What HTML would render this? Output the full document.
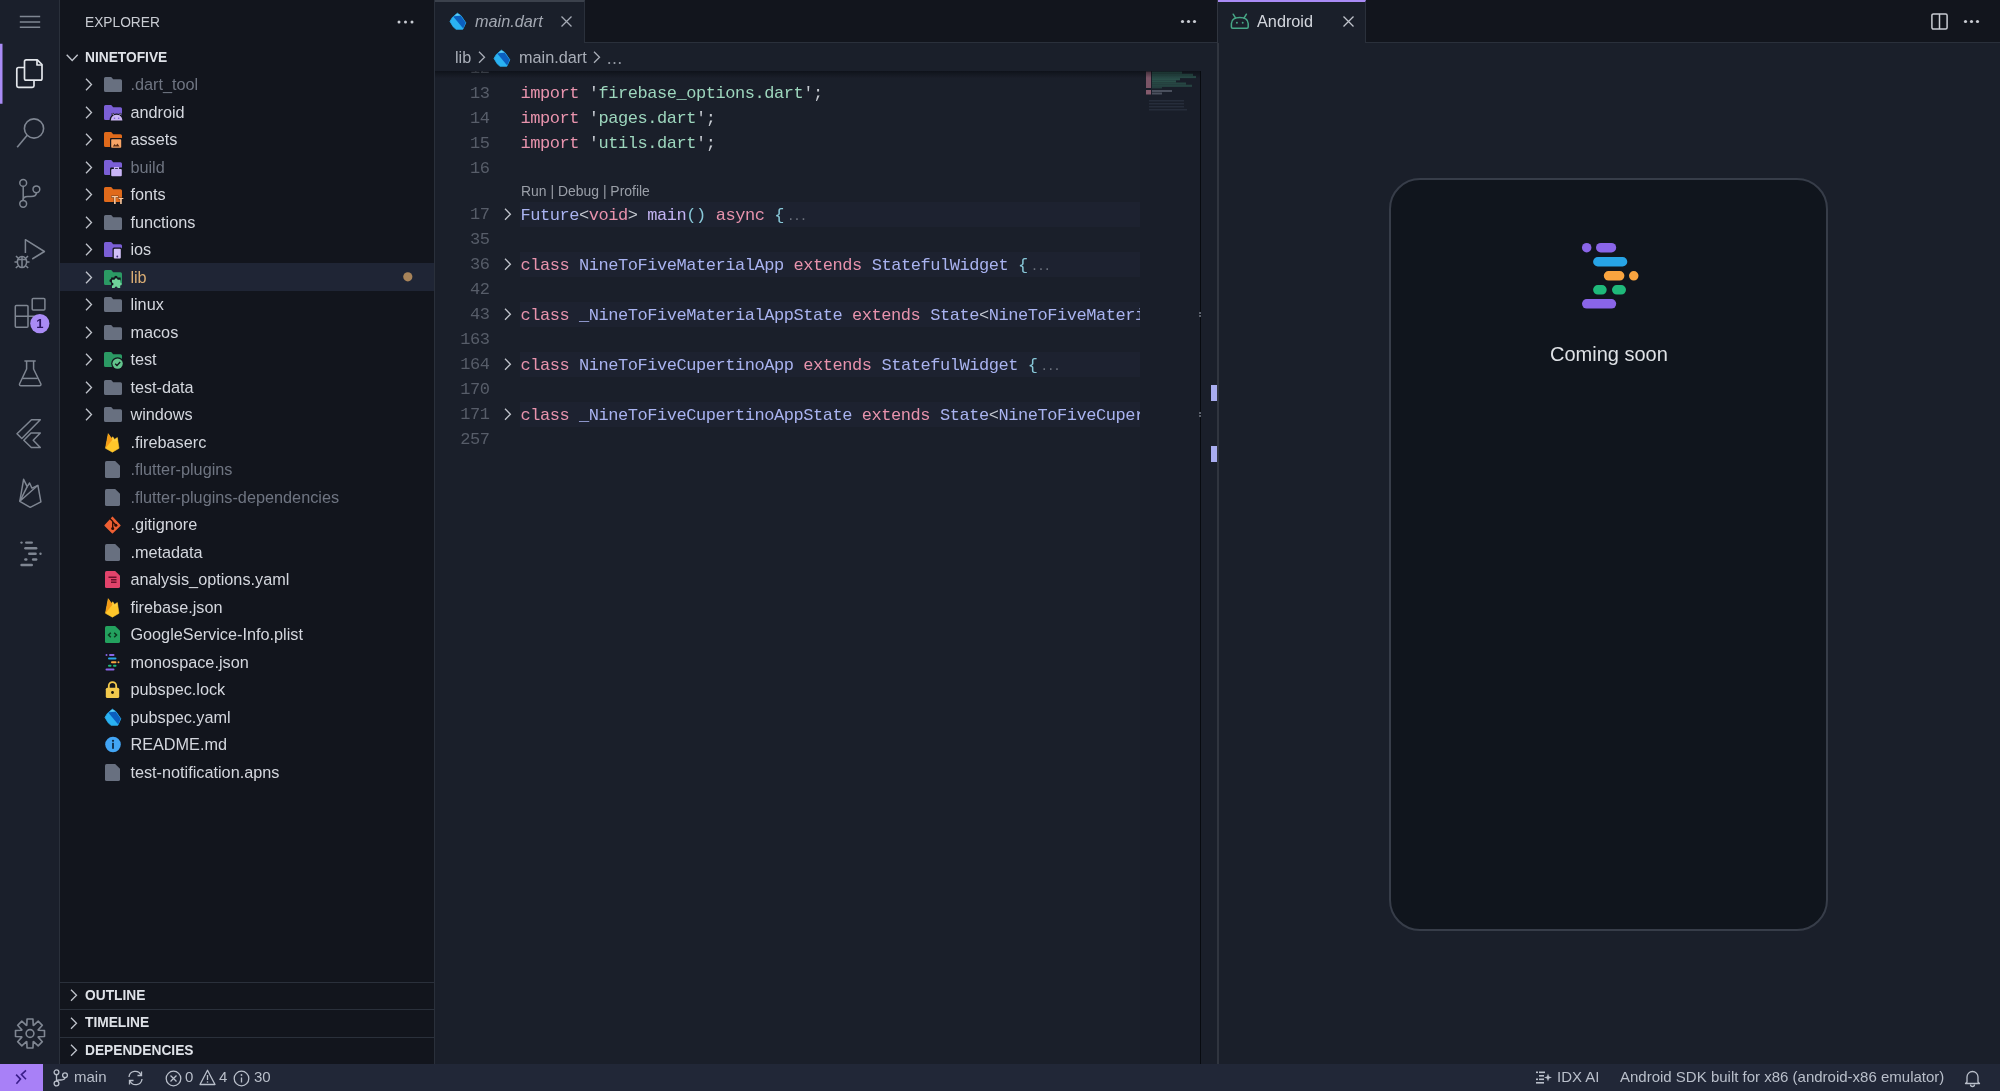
<!DOCTYPE html>
<html><head><meta charset="utf-8">
<style>
*{box-sizing:border-box;margin:0;padding:0}
html,body{width:2000px;height:1091px;overflow:hidden;background:#1a1f28;font-family:"Liberation Sans",sans-serif;color:#d4d7de}
.a{position:absolute}
svg{position:absolute;overflow:visible}
#act{left:0;top:0;width:60px;height:1064px;background:#1a1f2b;border-right:1px solid #2a303b}
#side{left:60px;top:0;width:375px;height:1064px;background:#12151d;border-right:1px solid #2a303b}
#ed{left:435px;top:0;width:783px;height:1064px;background:#1a1f2a}
#pn{left:1218px;top:0;width:782px;height:1064px;background:#1a1f2a}
#st{left:0;top:1064px;width:2000px;height:27px;background:#212737;font-size:15px;color:#b9bfca}
.row{position:absolute;left:0;width:374px;height:27.5px;font-size:16.25px;line-height:27.5px;white-space:nowrap}
.row .t{position:absolute;left:70.4px;top:0.3px}
.dim{color:#6f7582}
.sec{position:absolute;left:0;width:374px;height:27.5px;border-top:1px solid #2a303b;font-size:13.75px;font-weight:bold;line-height:26px;color:#dfe2e8}
.sec span{position:absolute;left:25px}
.cl{position:absolute;left:0;width:766px;height:25px;font-family:"Liberation Mono",monospace;font-size:17px;letter-spacing:-0.45px;line-height:26px;white-space:pre}
.cl .ln{position:absolute;top:0.4px;left:25.25px;width:29.25px;text-align:right;color:#575d69}
.cl .ct{position:absolute;top:0.4px;left:85.5px;color:#c5c9d0}
.cl .fh{position:absolute;left:85px;top:0;width:619.5px;height:25px;background:#1d2230}
.a{will-change:transform}</style></head><body>
<!-- ACTIVITY BAR -->
<div id="act" class="a">
  <svg style="left:0;top:0" width="60" height="1064">
   <g stroke="#7f8692" stroke-width="1.5" fill="none">
    <path d="M19.8 16.6H40.2M19.8 21.9H40.2M19.8 27.2H40.2"/>
   </g>
   <rect x="0" y="43.75" width="2.5" height="60" fill="#a98bf5"/>
   <g stroke="#e3e6eb" stroke-width="1.7" fill="none" stroke-linejoin="round">
    <path d="M24.5 67.5H18.5Q16.8 67.5 16.8 69.2V85.8Q16.8 87.3 18.5 87.3H32.3Q34 87.3 34 85.8V80.5"/>
    <path d="M26.2 59.8H37.3L42 64.5V78.5Q42 80.2 40.3 80.2H26.2Q24.5 80.2 24.5 78.5V61.5Q24.5 59.8 26.2 59.8Z"/>
    <path d="M37 60V65H42"/>
   </g>
   <g stroke="#7f8692" stroke-width="1.6" fill="none">
    <circle cx="34" cy="128.5" r="9.6"/>
    <path d="M27.2 135.3L17.2 147.3"/>
   </g>
   <g stroke="#7f8692" stroke-width="1.5" fill="none">
    <circle cx="23.2" cy="182.9" r="3.4"/>
    <circle cx="36.4" cy="189.3" r="3.4"/>
    <circle cx="23.2" cy="203.8" r="3.4"/>
    <path d="M23.2 186.3V200.4"/>
    <path d="M36.4 192.7Q36.4 196.5 31 196.5H27.5Q23.2 196.5 23.2 200"/>
   </g>
   <g stroke="#7f8692" stroke-width="1.5" fill="none" stroke-linejoin="round">
    <path d="M25.4 253V239.7L44.4 251.5L32.2 259"/>
    <ellipse cx="22" cy="262" rx="4.6" ry="5.6"/>
    <path d="M17.6 259.5H26.4M22 257V267.5M16 256L18 258M28 256L26 258M14.5 262H17.4M26.6 262H29.5M15.8 268L18 266M28.2 268L26 266"/>
   </g>
   <g stroke="#7f8692" stroke-width="1.5" fill="none">
    <rect x="15.3" y="305.5" width="12.7" height="21.7" rx="1"/>
    <path d="M15.3 316.3H28M28 316.3H38.5"/>
    <rect x="32.2" y="298.6" width="12.7" height="11.4" rx="1"/>
   </g>
   <circle cx="39.8" cy="323.6" r="9.6" fill="#a98bf5"/>
   <text x="39.8" y="328.3" text-anchor="middle" font-family="Liberation Sans" font-weight="bold" font-size="13" fill="#2a1560">1</text>
   <g stroke="#7f8692" stroke-width="1.5" fill="none" stroke-linejoin="round">
    <path d="M24.4 361H35.7M26.6 361V369L19.5 384Q19.2 385.7 21 385.7H39.5Q41.2 385.7 40.9 384L33.6 369V361"/>
    <path d="M22.5 378.4H37.8"/>
   </g>
   <g stroke="#7f8692" stroke-width="1.5" fill="none" stroke-linejoin="round">
    <path d="M31.5 419.8H40.3L21.8 438.5L17 433.8Z"/>
    <path d="M31 433H40.3L33.2 440.3L40.3 447.5H31.3L23.8 440.3Z"/>
   </g>
   <g stroke="#7f8692" stroke-width="1.5" fill="none" stroke-linejoin="round">
    <path d="M30.2 507.3L19.8 501.3L23.6 479.3L27.2 486.6L29.6 483L32 488.2L37.9 485.3L40.9 501.8Z"/>
    <path d="M19.8 501.3L37.9 485.3M19.8 501.3L27.2 486.6"/>
   </g>
   <g fill="#7f8692">
    <rect x="20.3" y="541.4" width="2.4" height="2.4" rx="1.2"/>
    <rect x="25" y="541.4" width="8" height="2.4" rx="1.2"/>
    <rect x="24.2" y="547.1" width="13.2" height="2.4" rx="1.2"/>
    <rect x="28" y="552.6" width="8.8" height="2.4" rx="1.2"/>
    <rect x="39.3" y="552.6" width="2.4" height="2.4" rx="1.2"/>
    <rect x="24.2" y="558.3" width="3.3" height="2.4" rx="1.2"/>
    <rect x="31.9" y="558.3" width="5.5" height="2.4" rx="1.2"/>
    <rect x="20.3" y="563.8" width="12.7" height="2.4" rx="1.2"/>
   </g>
   <g transform="translate(30 1033.5)" stroke="#7f8692" stroke-width="1.6" fill="none" stroke-linejoin="round">
    <path d="M-3.22 -8.30 L-2.94 -14.50 L2.94 -14.50 L3.22 -8.30 L3.59 -8.14 L8.18 -12.34 L12.34 -8.18 L8.14 -3.59 L8.30 -3.22 L14.50 -2.94 L14.50 2.94 L8.30 3.22 L8.14 3.59 L12.34 8.18 L8.18 12.34 L3.59 8.14 L3.22 8.30 L2.94 14.50 L-2.94 14.50 L-3.22 8.30 L-3.59 8.14 L-8.18 12.34 L-12.34 8.18 L-8.14 3.59 L-8.30 3.22 L-14.50 2.94 L-14.50 -2.94 L-8.30 -3.22 L-8.14 -3.59 L-12.34 -8.18 L-8.18 -12.34 L-3.59 -8.14Z"/>
    <circle r="3.9"/>
   </g>
  </svg>
</div>
<!-- SIDEBAR -->
<div id="side" class="a">
  <div class="a" style="left:25px;top:14.5px;font-size:13.75px;line-height:16px;color:#c9ccd3">EXPLORER</div>
  <svg style="left:336px;top:18.5px" width="22" height="6"><circle cx="3" cy="3" r="1.5" fill="#c9ccd3"/><circle cx="9.5" cy="3" r="1.5" fill="#c9ccd3"/><circle cx="16" cy="3" r="1.5" fill="#c9ccd3"/></svg>
  <svg style="left:6px;top:53.5px" width="13" height="8"><path d="M0.7 0.8L6.2 6.5L11.7 0.8" fill="none" stroke="#c0c4cc" stroke-width="1.4"/></svg>
  <div class="a" style="left:25px;top:50px;font-size:13.75px;line-height:16px;font-weight:bold;color:#dfe2e8">NINETOFIVE</div>
  <div class="row" style="top:70.75px;"><svg style="left:24.7px;top:7.25px" width="8" height="13"><path d="M1 0.8 L6.5 6.5 L1 12.2" fill="none" stroke="#c0c4cc" stroke-width="1.3"/></svg><svg style="left:43.6px;top:6.25px" width="19" height="16"><path d="M1.5 0H7.2L9.2 2.3H16.5Q18 2.3 18 3.8V13.5Q18 15 16.5 15H1.5Q0 15 0 13.5V1.5Q0 0 1.5 0Z" fill="#687080" transform="translate(0 0)"/></svg><span class="t" style="color:#6f7582;">.dart_tool</span></div>
<div class="row" style="top:98.25px;"><svg style="left:24.7px;top:7.25px" width="8" height="13"><path d="M1 0.8 L6.5 6.5 L1 12.2" fill="none" stroke="#c0c4cc" stroke-width="1.3"/></svg><svg style="left:43.6px;top:6.25px" width="19" height="16"><path d="M1.5 0H7.2L9.2 2.3H16.5Q18 2.3 18 3.8V13.5Q18 15 16.5 15H1.5Q0 15 0 13.5V1.5Q0 0 1.5 0Z" fill="#7b5fd6" transform="translate(0 0)"/><path d="M5.3 16.2Q5.8 8.4 12.6 8.4Q19.4 8.4 19.9 16.2Z" fill="#12151d"/><path d="M6.8 15.6Q7.2 9.8 12.6 9.8Q18 9.8 18.4 15.6Z" fill="#cdb8f6"/><path d="M8.2 8.2L9.6 10.6M17 8.2L15.6 10.6" stroke="#12151d" stroke-width="2.2"/><path d="M8.6 8.6L9.8 10.6M16.6 8.6L15.4 10.6" stroke="#cdb8f6" stroke-width="1"/><circle cx="10.5" cy="13.2" r="0.8" fill="#7b5fd6"/><circle cx="14.7" cy="13.2" r="0.8" fill="#7b5fd6"/></svg><span class="t" style="">android</span></div>
<div class="row" style="top:125.75px;"><svg style="left:24.7px;top:7.25px" width="8" height="13"><path d="M1 0.8 L6.5 6.5 L1 12.2" fill="none" stroke="#c0c4cc" stroke-width="1.3"/></svg><svg style="left:43.6px;top:6.25px" width="19" height="16"><path d="M1.5 0H7.2L9.2 2.3H16.5Q18 2.3 18 3.8V13.5Q18 15 16.5 15H1.5Q0 15 0 13.5V1.5Q0 0 1.5 0Z" fill="#e06a1b" transform="translate(0 0)"/><rect x="6" y="6" width="12.5" height="10.5" rx="1" fill="#12151d"/><rect x="7.2" y="7.2" width="10" height="8.5" rx="0.8" fill="#f7a466"/><path d="M8.8 14.5L10.6 12L12 13.5L13.4 11.5L15.6 14.5Z" fill="#5a2a10"/></svg><span class="t" style="">assets</span></div>
<div class="row" style="top:153.25px;"><svg style="left:24.7px;top:7.25px" width="8" height="13"><path d="M1 0.8 L6.5 6.5 L1 12.2" fill="none" stroke="#c0c4cc" stroke-width="1.3"/></svg><svg style="left:43.6px;top:6.25px" width="19" height="16"><path d="M1.5 0H7.2L9.2 2.3H16.5Q18 2.3 18 3.8V13.5Q18 15 16.5 15H1.5Q0 15 0 13.5V1.5Q0 0 1.5 0Z" fill="#7b5fd6" transform="translate(0 0)"/><rect x="6" y="7.5" width="13" height="9.5" rx="1.2" fill="#12151d"/><rect x="7.2" y="9" width="10.6" height="7.2" rx="1" fill="#c9b4f6"/><path d="M10.5 9V7.6H14.5V9" fill="none" stroke="#c9b4f6" stroke-width="1.2"/></svg><span class="t" style="color:#6f7582;">build</span></div>
<div class="row" style="top:180.75px;"><svg style="left:24.7px;top:7.25px" width="8" height="13"><path d="M1 0.8 L6.5 6.5 L1 12.2" fill="none" stroke="#c0c4cc" stroke-width="1.3"/></svg><svg style="left:43.6px;top:6.25px" width="19" height="16"><path d="M1.5 0H7.2L9.2 2.3H16.5Q18 2.3 18 3.8V13.5Q18 15 16.5 15H1.5Q0 15 0 13.5V1.5Q0 0 1.5 0Z" fill="#e06a1b" transform="translate(0 0)"/><rect x="6.5" y="6.5" width="12" height="10" fill="#12151d" opacity="0"/><text x="7.5" y="16.5" font-family="Liberation Sans" font-weight="bold" font-size="11" fill="#f9c9a0" stroke="#12151d" stroke-width="0.6" paint-order="stroke">Tт</text></svg><span class="t" style="">fonts</span></div>
<div class="row" style="top:208.25px;"><svg style="left:24.7px;top:7.25px" width="8" height="13"><path d="M1 0.8 L6.5 6.5 L1 12.2" fill="none" stroke="#c0c4cc" stroke-width="1.3"/></svg><svg style="left:43.6px;top:6.25px" width="19" height="16"><path d="M1.5 0H7.2L9.2 2.3H16.5Q18 2.3 18 3.8V13.5Q18 15 16.5 15H1.5Q0 15 0 13.5V1.5Q0 0 1.5 0Z" fill="#687080" transform="translate(0 0)"/></svg><span class="t" style="">functions</span></div>
<div class="row" style="top:235.75px;"><svg style="left:24.7px;top:7.25px" width="8" height="13"><path d="M1 0.8 L6.5 6.5 L1 12.2" fill="none" stroke="#c0c4cc" stroke-width="1.3"/></svg><svg style="left:43.6px;top:6.25px" width="19" height="16"><path d="M1.5 0H7.2L9.2 2.3H16.5Q18 2.3 18 3.8V13.5Q18 15 16.5 15H1.5Q0 15 0 13.5V1.5Q0 0 1.5 0Z" fill="#7b5fd6" transform="translate(0 0)"/><rect x="8.5" y="5.5" width="9.5" height="12" rx="1.5" fill="#12151d"/><rect x="9.8" y="6.8" width="7" height="9.8" rx="1" fill="#d2c0f8"/><circle cx="13.3" cy="14.5" r="0.9" fill="#3b2a78"/></svg><span class="t" style="">ios</span></div>
<div class="row" style="top:263.25px;background:#1f2535;"><svg style="left:24.7px;top:7.25px" width="8" height="13"><path d="M1 0.8 L6.5 6.5 L1 12.2" fill="none" stroke="#c0c4cc" stroke-width="1.3"/></svg><svg style="left:43.6px;top:6.25px" width="19" height="16"><path d="M1.5 0H7.2L9.2 2.3H16.5Q18 2.3 18 3.8V13.5Q18 15 16.5 15H1.5Q0 15 0 13.5V1.5Q0 0 1.5 0Z" fill="#2b9a64" transform="translate(0 0)"/><path d="M7 10.5h3.2a1.8 1.8 0 1 1 3.6 0H17v3.3a1.8 1.8 0 1 0 0 3.2V19H13.8a1.8 1.8 0 1 0-3.6 0H7V15.8a1.8 1.8 0 1 1 0-3.6Z" fill="#12151d" transform="translate(0.5 -2.5) scale(0.95)"/><path d="M8 9.8h2.6a1.5 1.5 0 1 1 3 0H16.2v2.6a1.5 1.5 0 1 1 0 3v2.6H13.6a1.5 1.5 0 1 0-3 0H8V15.4a1.5 1.5 0 1 0 0-3Z" fill="#6fd49a"/></svg><span class="t" style="color:#d9ad74;">lib</span><svg style="left:343px;top:8.75px" width="10" height="10"><circle cx="4.8" cy="4.8" r="4.6" fill="#a8845a"/></svg></div>
<div class="row" style="top:290.75px;"><svg style="left:24.7px;top:7.25px" width="8" height="13"><path d="M1 0.8 L6.5 6.5 L1 12.2" fill="none" stroke="#c0c4cc" stroke-width="1.3"/></svg><svg style="left:43.6px;top:6.25px" width="19" height="16"><path d="M1.5 0H7.2L9.2 2.3H16.5Q18 2.3 18 3.8V13.5Q18 15 16.5 15H1.5Q0 15 0 13.5V1.5Q0 0 1.5 0Z" fill="#687080" transform="translate(0 0)"/></svg><span class="t" style="">linux</span></div>
<div class="row" style="top:318.25px;"><svg style="left:24.7px;top:7.25px" width="8" height="13"><path d="M1 0.8 L6.5 6.5 L1 12.2" fill="none" stroke="#c0c4cc" stroke-width="1.3"/></svg><svg style="left:43.6px;top:6.25px" width="19" height="16"><path d="M1.5 0H7.2L9.2 2.3H16.5Q18 2.3 18 3.8V13.5Q18 15 16.5 15H1.5Q0 15 0 13.5V1.5Q0 0 1.5 0Z" fill="#687080" transform="translate(0 0)"/></svg><span class="t" style="">macos</span></div>
<div class="row" style="top:345.75px;"><svg style="left:24.7px;top:7.25px" width="8" height="13"><path d="M1 0.8 L6.5 6.5 L1 12.2" fill="none" stroke="#c0c4cc" stroke-width="1.3"/></svg><svg style="left:43.6px;top:6.25px" width="19" height="16"><path d="M1.5 0H7.2L9.2 2.3H16.5Q18 2.3 18 3.8V13.5Q18 15 16.5 15H1.5Q0 15 0 13.5V1.5Q0 0 1.5 0Z" fill="#2b9a64" transform="translate(0 0)"/><circle cx="13.6" cy="11.6" r="6.4" fill="#12151d"/><circle cx="13.6" cy="11.6" r="5.2" fill="#62c48c"/><path d="M11.2 11.7L13 13.4L16.2 10.1" fill="none" stroke="#12151d" stroke-width="1.4"/></svg><span class="t" style="">test</span></div>
<div class="row" style="top:373.25px;"><svg style="left:24.7px;top:7.25px" width="8" height="13"><path d="M1 0.8 L6.5 6.5 L1 12.2" fill="none" stroke="#c0c4cc" stroke-width="1.3"/></svg><svg style="left:43.6px;top:6.25px" width="19" height="16"><path d="M1.5 0H7.2L9.2 2.3H16.5Q18 2.3 18 3.8V13.5Q18 15 16.5 15H1.5Q0 15 0 13.5V1.5Q0 0 1.5 0Z" fill="#687080" transform="translate(0 0)"/></svg><span class="t" style="">test-data</span></div>
<div class="row" style="top:400.75px;"><svg style="left:24.7px;top:7.25px" width="8" height="13"><path d="M1 0.8 L6.5 6.5 L1 12.2" fill="none" stroke="#c0c4cc" stroke-width="1.3"/></svg><svg style="left:43.6px;top:6.25px" width="19" height="16"><path d="M1.5 0H7.2L9.2 2.3H16.5Q18 2.3 18 3.8V13.5Q18 15 16.5 15H1.5Q0 15 0 13.5V1.5Q0 0 1.5 0Z" fill="#687080" transform="translate(0 0)"/></svg><span class="t" style="">windows</span></div>
<div class="row" style="top:428.25px;"><svg style="left:45px;top:5.25px" width="16" height="17"><path d="M3.25 -0.3L0.5 14.3L7.4 18.15L14 14.3L12.3 3.6L9.6 5.4L7.65 2.75L6.3 4.6Z" fill="#ffc62a" stroke="#ffc62a" stroke-width="0.6" stroke-linejoin="round"/><path d="M3.25 -0.3L0.5 14.3L7.6 5.6Z" fill="#f59a16"/><path d="M7.65 2.75L9.6 5.4L12.3 3.6L12.8 7L7.2 7.5Z" fill="#ffd54f" opacity="0.5"/></svg><span class="t" style="">.firebaserc</span></div>
<div class="row" style="top:455.75px;"><svg style="left:45px;top:5.25px" width="15" height="17"><path d="M1.6 0H10.2L15 4.8V15.4Q15 17 13.4 17H1.6Q0 17 0 15.4V1.6Q0 0 1.6 0Z" fill="#687080" transform="translate(0 0)"/></svg><span class="t" style="color:#6f7582;">.flutter-plugins</span></div>
<div class="row" style="top:483.25px;"><svg style="left:45px;top:5.25px" width="15" height="17"><path d="M1.6 0H10.2L15 4.8V15.4Q15 17 13.4 17H1.6Q0 17 0 15.4V1.6Q0 0 1.6 0Z" fill="#687080" transform="translate(0 0)"/></svg><span class="t" style="color:#6f7582;">.flutter-plugins-dependencies</span></div>
<div class="row" style="top:510.75px;"><svg style="left:45px;top:5.25px" width="16" height="17"><path d="M7.4 0.6Q7.4 0.3 7.8 0.7L15.4 8.9Q15.9 9.4 15.4 9.9L7.9 17.2Q7.4 17.7 6.9 17.2L-0.4 9.9Q-0.9 9.4 -0.4 8.9Z" fill="#ee5f33"/><path d="M4.6 2.2L7.7 5.3V12.6M7.7 5.6L10.9 9.3" fill="none" stroke="#2a0e06" stroke-width="1.3"/><circle cx="7.7" cy="12.6" r="1.5" fill="#2a0e06"/><circle cx="10.9" cy="9.3" r="1.5" fill="#2a0e06"/></svg><span class="t" style="">.gitignore</span></div>
<div class="row" style="top:538.25px;"><svg style="left:45px;top:5.25px" width="15" height="17"><path d="M1.6 0H10.2L15 4.8V15.4Q15 17 13.4 17H1.6Q0 17 0 15.4V1.6Q0 0 1.6 0Z" fill="#687080" transform="translate(0 0)"/></svg><span class="t" style="">.metadata</span></div>
<div class="row" style="top:565.75px;"><svg style="left:45px;top:5.25px" width="15" height="17"><path d="M1.6 0H10.2L15 4.8V15.4Q15 17 13.4 17H1.6Q0 17 0 15.4V1.6Q0 0 1.6 0Z" fill="#e2436b" transform="translate(0 0)"/><path d="M3.5 6.3H11.5M6 8.8H11.5M6 11.3H11.5" stroke="#6a0f2a" stroke-width="1.5"/></svg><span class="t" style="">analysis_options.yaml</span></div>
<div class="row" style="top:593.25px;"><svg style="left:45px;top:5.25px" width="16" height="17"><path d="M3.25 -0.3L0.5 14.3L7.4 18.15L14 14.3L12.3 3.6L9.6 5.4L7.65 2.75L6.3 4.6Z" fill="#ffc62a" stroke="#ffc62a" stroke-width="0.6" stroke-linejoin="round"/><path d="M3.25 -0.3L0.5 14.3L7.6 5.6Z" fill="#f59a16"/><path d="M7.65 2.75L9.6 5.4L12.3 3.6L12.8 7L7.2 7.5Z" fill="#ffd54f" opacity="0.5"/></svg><span class="t" style="">firebase.json</span></div>
<div class="row" style="top:620.75px;"><svg style="left:45px;top:5.25px" width="15" height="17"><path d="M1.6 0H10.2L15 4.8V15.4Q15 17 13.4 17H1.6Q0 17 0 15.4V1.6Q0 0 1.6 0Z" fill="#23a15e" transform="translate(0 0)"/><path d="M5.8 6.8L3.5 9L5.8 11.2M9.2 6.8L11.5 9L9.2 11.2" fill="none" stroke="#0c3a1f" stroke-width="1.5"/></svg><span class="t" style="">GoogleService-Info.plist</span></div>
<div class="row" style="top:648.25px;"><svg style="left:45px;top:5.25px" width="16" height="17"><rect x="0.5" y="0" width="2" height="2" rx="1" fill="#8a65e8"/><rect x="4" y="0" width="5.5" height="2" rx="1" fill="#8a65e8"/><rect x="3" y="3.6" width="8.5" height="2" rx="1" fill="#27a4e6"/><rect x="6" y="7.2" width="5.5" height="2" rx="1" fill="#f9a43f"/><rect x="12.5" y="7.2" width="2" height="2" rx="1" fill="#f9a43f"/><rect x="3" y="10.8" width="3.5" height="2" rx="1" fill="#1fb97a"/><rect x="8" y="10.8" width="3.5" height="2" rx="1" fill="#1fb97a"/><rect x="0.5" y="14.4" width="9" height="2" rx="1" fill="#8a65e8"/></svg><span class="t" style="">monospace.json</span></div>
<div class="row" style="top:675.75px;"><svg style="left:45px;top:5.25px" width="16" height="17"><path d="M3.8 7V4.8A3.7 3.7 0 0 1 11.2 4.8V7" fill="none" stroke="#f2c94c" stroke-width="1.8"/><rect x="0.8" y="6.8" width="13.4" height="10.2" rx="1.5" fill="#f2c94c"/><circle cx="7.5" cy="11.5" r="1.4" fill="#1a1608"/></svg><span class="t" style="">pubspec.lock</span></div>
<div class="row" style="top:703.25px;"><svg style="left:45px;top:5.25px" width="16" height="17"><path d="M7.4 0.2L11 2.7L15.8 9.8L12.8 16.3H6.1L3.2 13.8L0 8.4L2.4 4.4Z" fill="#2ab2f2" stroke="#2ab2f2" stroke-width="0.8" stroke-linejoin="round"/><path d="M3.2 3.6L10.5 2.5L15.6 9.8L13.2 15.4Z" fill="#0b5fbf"/><path d="M4.5 2.6L7.4 0.4L10.6 2.5Z" fill="#64cdf5"/></svg><span class="t" style="">pubspec.yaml</span></div>
<div class="row" style="top:730.75px;"><svg style="left:45px;top:5.25px" width="16" height="17"><circle cx="8" cy="8.5" r="7.8" fill="#42a5f5"/><circle cx="8" cy="4.8" r="1.1" fill="#0d2a45"/><rect x="7.1" y="6.8" width="1.8" height="6" fill="#0d2a45"/></svg><span class="t" style="">README.md</span></div>
<div class="row" style="top:758.25px;"><svg style="left:45px;top:5.25px" width="15" height="17"><path d="M1.6 0H10.2L15 4.8V15.4Q15 17 13.4 17H1.6Q0 17 0 15.4V1.6Q0 0 1.6 0Z" fill="#687080" transform="translate(0 0)"/></svg><span class="t" style="">test-notification.apns</span></div>
  <div class="sec" style="top:981.5px"><svg style="left:9.5px;top:6.5px" width="8" height="13"><path d="M1 0.8L6.5 6.3L1 11.8" fill="none" stroke="#c0c4cc" stroke-width="1.3"/></svg><span>OUTLINE</span></div>
  <div class="sec" style="top:1009px"><svg style="left:9.5px;top:6.5px" width="8" height="13"><path d="M1 0.8L6.5 6.3L1 11.8" fill="none" stroke="#c0c4cc" stroke-width="1.3"/></svg><span>TIMELINE</span></div>
  <div class="sec" style="top:1036.5px"><svg style="left:9.5px;top:6.5px" width="8" height="13"><path d="M1 0.8L6.5 6.3L1 11.8" fill="none" stroke="#c0c4cc" stroke-width="1.3"/></svg><span>DEPENDENCIES</span></div>
</div>
<!-- EDITOR -->
<div id="ed" class="a">
  <div class="a" style="left:0;top:0;width:783px;height:43px;background:#12151d;border-bottom:1px solid #2a303b"></div>
  <div class="a" style="left:0;top:0;width:150px;height:43px;background:#1a1f2a;border-top:2px solid #3b414c;border-right:1px solid #2a303b"></div>
  <svg style="left:15px;top:13px" width="17" height="17"><path d="M7.4 0.2L11 2.7L15.8 9.8L12.8 16.3H6.1L3.2 13.8L0 8.4L2.4 4.4Z" fill="#2ab2f2" stroke="#2ab2f2" stroke-width="0.8" stroke-linejoin="round"/><path d="M3.2 3.6L10.5 2.5L15.6 9.8L13.2 15.4Z" fill="#0b5fbf"/><path d="M4.5 2.6L7.4 0.4L10.6 2.5Z" fill="#64cdf5"/></svg>
  <div class="a" style="left:40px;top:11px;font-size:16.25px;line-height:20px;font-style:italic;color:#a3a8b2;white-space:nowrap">main.dart</div>
  <svg style="left:126px;top:16px" width="11" height="11"><path d="M0.5 0.5L10.5 10.5M10.5 0.5L0.5 10.5" stroke="#a5abb5" stroke-width="1.3"/></svg>
  <svg style="left:745px;top:18.5px" width="20" height="5"><circle cx="2.5" cy="2.5" r="1.6" fill="#c9ccd3"/><circle cx="8.5" cy="2.5" r="1.6" fill="#c9ccd3"/><circle cx="14.5" cy="2.5" r="1.6" fill="#c9ccd3"/></svg>
  <!-- breadcrumbs -->
  <div class="a" style="left:0;top:43px;width:783px;height:27.5px;background:#1a1f2a"></div>
  <div class="a" style="left:20px;top:47px;font-size:16.25px;line-height:20px;color:#a9aeb8;white-space:nowrap">lib</div>
  <svg style="left:43px;top:51px" width="8" height="13"><path d="M1 0.8L6.5 6.3L1 11.8" fill="none" stroke="#a9aeb8" stroke-width="1.3"/></svg>
  <svg style="left:59px;top:49.5px" width="17" height="17"><path d="M7.4 0.2L11 2.7L15.8 9.8L12.8 16.3H6.1L3.2 13.8L0 8.4L2.4 4.4Z" fill="#2ab2f2" stroke="#2ab2f2" stroke-width="0.8" stroke-linejoin="round"/><path d="M3.2 3.6L10.5 2.5L15.6 9.8L13.2 15.4Z" fill="#0b5fbf"/><path d="M4.5 2.6L7.4 0.4L10.6 2.5Z" fill="#64cdf5"/></svg>
  <div class="a" style="left:84px;top:47px;font-size:16.25px;line-height:20px;color:#a9aeb8;white-space:nowrap">main.dart</div>
  <svg style="left:158px;top:51px" width="8" height="13"><path d="M1 0.8L6.5 6.3L1 11.8" fill="none" stroke="#a9aeb8" stroke-width="1.3"/></svg>
  <svg style="left:172px;top:60.5px" width="16" height="4"><circle cx="2.2" cy="2" r="1.05" fill="#9ea3ad"/><circle cx="7.5" cy="2" r="1.05" fill="#9ea3ad"/><circle cx="12.8" cy="2" r="1.05" fill="#9ea3ad"/></svg>
  <!-- code area -->
  <div id="code" class="a" style="left:0;top:70.5px;width:766px;height:993.5px;overflow:hidden;background:#1a1f2a">
<div class="cl" style="top:-15.5px">
<div class="ln">12</div><div class="ct"></div></div>
<div class="cl" style="top:9.5px">
<div class="ln">13</div><div class="ct"><span style="color:#e893ad">import</span> <span style="color:#c5c9d0">'</span><span style="color:#9dd6bd">firebase_options.dart</span><span style="color:#c5c9d0">'</span><span style="color:#c5c9d0">;</span></div></div>
<div class="cl" style="top:34.5px">
<div class="ln">14</div><div class="ct"><span style="color:#e893ad">import</span> <span style="color:#c5c9d0">'</span><span style="color:#9dd6bd">pages.dart</span><span style="color:#c5c9d0">'</span><span style="color:#c5c9d0">;</span></div></div>
<div class="cl" style="top:59.5px">
<div class="ln">15</div><div class="ct"><span style="color:#e893ad">import</span> <span style="color:#c5c9d0">'</span><span style="color:#9dd6bd">utils.dart</span><span style="color:#c5c9d0">'</span><span style="color:#c5c9d0">;</span></div></div>
<div class="cl" style="top:84.5px">
<div class="ln">16</div><div class="ct"></div></div>
<div class="cl" style="top:130.5px">
<div class="fh"></div>
<svg style="left:69.4px;top:6.4px" width="8" height="13"><path d="M1 0.8L6.4 6.3L1 11.8" fill="none" stroke="#c0c4cc" stroke-width="1.3"/></svg>
<div class="ln">17</div><div class="ct"><span style="color:#a9b3f0">Future</span><span style="color:#c5c9d0">&lt;</span><span style="color:#e893ad">void</span><span style="color:#c5c9d0">&gt;</span> <span style="color:#c2b3f2">main</span><span style="color:#88c8d8">()</span> <span style="color:#e893ad">async</span> <span style="color:#88c8d8">{</span><span style="font-family:'Liberation Sans',sans-serif;font-size:16px;letter-spacing:2px;margin-left:4.5px;color:#6a707c">...</span></div></div>
<div class="cl" style="top:155.5px">
<div class="ln">35</div><div class="ct"></div></div>
<div class="cl" style="top:180.5px">
<div class="fh"></div>
<svg style="left:69.4px;top:6.4px" width="8" height="13"><path d="M1 0.8L6.4 6.3L1 11.8" fill="none" stroke="#c0c4cc" stroke-width="1.3"/></svg>
<div class="ln">36</div><div class="ct"><span style="color:#e893ad">class</span> <span style="color:#a9b3f0">NineToFiveMaterialApp</span> <span style="color:#e893ad">extends</span> <span style="color:#a9b3f0">StatefulWidget</span> <span style="color:#88c8d8">{</span><span style="font-family:'Liberation Sans',sans-serif;font-size:16px;letter-spacing:2px;margin-left:4.5px;color:#6a707c">...</span></div></div>
<div class="cl" style="top:205.5px">
<div class="ln">42</div><div class="ct"></div></div>
<div class="cl" style="top:230.5px">
<div class="fh"></div>
<svg style="left:69.4px;top:6.4px" width="8" height="13"><path d="M1 0.8L6.4 6.3L1 11.8" fill="none" stroke="#c0c4cc" stroke-width="1.3"/></svg>
<div class="ln">43</div><div class="ct"><span style="color:#e893ad">class</span> <span style="color:#a9b3f0">_NineToFiveMaterialAppState</span> <span style="color:#e893ad">extends</span> <span style="color:#a9b3f0">State</span><span style="color:#c5c9d0">&lt;</span><span style="color:#a9b3f0">NineToFiveMaterialApp</span><span style="color:#c5c9d0">&gt;</span> <span style="color:#88c8d8">{</span><span style="font-family:'Liberation Sans',sans-serif;font-size:16px;letter-spacing:2px;margin-left:4.5px;color:#6a707c">...</span></div></div>
<div class="cl" style="top:255.5px">
<div class="ln">163</div><div class="ct"></div></div>
<div class="cl" style="top:280.5px">
<div class="fh"></div>
<svg style="left:69.4px;top:6.4px" width="8" height="13"><path d="M1 0.8L6.4 6.3L1 11.8" fill="none" stroke="#c0c4cc" stroke-width="1.3"/></svg>
<div class="ln">164</div><div class="ct"><span style="color:#e893ad">class</span> <span style="color:#a9b3f0">NineToFiveCupertinoApp</span> <span style="color:#e893ad">extends</span> <span style="color:#a9b3f0">StatefulWidget</span> <span style="color:#88c8d8">{</span><span style="font-family:'Liberation Sans',sans-serif;font-size:16px;letter-spacing:2px;margin-left:4.5px;color:#6a707c">...</span></div></div>
<div class="cl" style="top:305.5px">
<div class="ln">170</div><div class="ct"></div></div>
<div class="cl" style="top:330.5px">
<div class="fh"></div>
<svg style="left:69.4px;top:6.4px" width="8" height="13"><path d="M1 0.8L6.4 6.3L1 11.8" fill="none" stroke="#c0c4cc" stroke-width="1.3"/></svg>
<div class="ln">171</div><div class="ct"><span style="color:#e893ad">class</span> <span style="color:#a9b3f0">_NineToFiveCupertinoAppState</span> <span style="color:#e893ad">extends</span> <span style="color:#a9b3f0">State</span><span style="color:#c5c9d0">&lt;</span><span style="color:#a9b3f0">NineToFiveCupertinoApp</span><span style="color:#c5c9d0">&gt;</span> <span style="color:#88c8d8">{</span><span style="font-family:'Liberation Sans',sans-serif;font-size:16px;letter-spacing:2px;margin-left:4.5px;color:#6a707c">...</span></div></div>
<div class="cl" style="top:355.5px">
<div class="ln">257</div><div class="ct"></div></div>
<div class="a" style="left:85.5px;top:109.6px;font-size:13.95px;line-height:21px;color:#9a9fa8;white-space:nowrap">Run | Debug | Profile</div>
  </div>
  
  <!-- minimap -->
  <div class="a" style="left:705px;top:70.5px;width:61px;height:993.5px;background:#191e29"></div>
  <svg style="left:705px;top:66px" width="61" height="50">
   <rect x="6" y="5.5" width="5" height="16.5" fill="#7a5466"/>
   <g fill="#3a7a66" opacity="0.6">
    <rect x="12" y="5.5" width="30" height="2.2"/>
    <rect x="12" y="7.7" width="41" height="2.2" opacity="0.85"/>
    <rect x="12" y="9.9" width="44" height="2.2" opacity="0.8"/>
    <rect x="12" y="12.1" width="28" height="2.2" opacity="0.9"/>
    <rect x="12" y="14.3" width="24" height="2.2" opacity="0.9"/>
    <rect x="12" y="16.5" width="34" height="2.2" opacity="0.75"/>
    <rect x="12" y="18.7" width="40" height="2.2" opacity="0.7"/>
    <rect x="12" y="20.9" width="10" height="1.5" opacity="0.6"/>
   </g>
   <rect x="6" y="24" width="5" height="4.5" fill="#845a6c"/>
   <rect x="12" y="24" width="20" height="2" fill="#6b7180" opacity="0.6"/>
   <rect x="12" y="26.5" width="10" height="2" fill="#6b7180" opacity="0.6"/>
   <g fill="#2a3140" opacity="0.8">
    <rect x="9" y="34" width="35" height="1.5"/><rect x="9" y="37" width="35" height="1.5"/><rect x="9" y="40" width="35" height="1.5"/><rect x="9" y="43" width="38" height="1.5"/>
   </g>
  </svg>
  <div class="a" style="left:0;top:70.5px;width:766px;height:7px;background:linear-gradient(rgba(6,8,12,0.5),rgba(6,8,12,0))"></div>
  <!-- scrollbar -->
  <div class="a" style="left:765.3px;top:70.5px;width:1.2px;height:993.5px;background:#080b10"></div>
  <div class="a" style="left:763.8px;top:311.5px;width:1.5px;height:2px;background:#5a606b"></div><div class="a" style="left:763.8px;top:314.5px;width:1.5px;height:2px;background:#5a606b"></div>
  <div class="a" style="left:763.8px;top:411.5px;width:1.5px;height:2px;background:#5a606b"></div><div class="a" style="left:763.8px;top:414.5px;width:1.5px;height:2px;background:#5a606b"></div>
  <div class="a" style="left:776px;top:385px;width:6px;height:15.5px;background:#a9adf0"></div>
  <div class="a" style="left:776px;top:446px;width:6px;height:16px;background:#a9adf0"></div>
</div>
<!-- PANEL -->
<div id="pn" class="a">
  <div class="a" style="left:0;top:0;width:782px;height:43px;background:#12151d;border-bottom:1px solid #2a303b"></div>
  <div class="a" style="left:-1.1px;top:0;width:2.2px;height:1064px;background:#30353f"></div>
  <div class="a" style="left:0;top:0;width:148px;height:43px;background:#1a1f2a;border-top:2px solid #a98bf5;border-right:1px solid #2a303b"></div>
  <svg style="left:12px;top:13px" width="20" height="17"><g fill="none" stroke="#47a686" stroke-width="1.5" stroke-linecap="round"><path d="M1.4 10.5Q1.8 4.6 9.8 4.6Q17.8 4.6 18.2 10.5V14Q18.2 15.2 17 15.2H2.6Q1.4 15.2 1.4 14Z" stroke-linejoin="round"/><path d="M3.2 1.2L5.6 5.2M16.4 1.2L14 5.2"/></g><circle cx="6.9" cy="9.8" r="0.95" fill="#47a686"/><circle cx="12.7" cy="9.8" r="0.95" fill="#47a686"/></svg>
  <div class="a" style="left:39px;top:11px;font-size:16.25px;line-height:20px;color:#d4d7de;white-space:nowrap">Android</div>
  <svg style="left:125px;top:16px" width="11" height="11"><path d="M0.5 0.5L10.5 10.5M10.5 0.5L0.5 10.5" stroke="#c0c4cc" stroke-width="1.3"/></svg>
  <svg style="left:713px;top:13px" width="17" height="17"><rect x="0.9" y="0.9" width="15.2" height="15.2" rx="1.5" fill="none" stroke="#c9ccd3" stroke-width="1.5"/><path d="M8.5 1V16" stroke="#c9ccd3" stroke-width="1.5"/></svg>
  <svg style="left:745px;top:18.5px" width="20" height="5"><circle cx="2.5" cy="2.5" r="1.6" fill="#c9ccd3"/><circle cx="8.5" cy="2.5" r="1.6" fill="#c9ccd3"/><circle cx="14.5" cy="2.5" r="1.6" fill="#c9ccd3"/></svg>
  <div class="a" style="left:171px;top:178px;width:439px;height:752.5px;background:#10151d;border:2.5px solid #373d49;border-radius:31px"></div>
  <svg style="left:0;top:0" width="782" height="400"><g stroke-linecap="round" stroke-width="9.5">
    <path d="M368.7 247.7h0" stroke="#8a65e8"/>
    <path d="M382.75 247.7h10.7" stroke="#8a65e8"/>
    <path d="M379.85 261.75h24.7" stroke="#27a4e6"/>
    <path d="M390.55 275.8h11.1M415.75 275.8h0" stroke="#f9a43f"/>
    <path d="M379.85 289.8h4.1M398.75 289.8h4.5" stroke="#1fb97a"/>
    <path d="M368.75 303.8h24.7" stroke="#8a65e8"/>
  </g></svg>
  <div class="a" style="left:332px;top:342px;font-size:20px;line-height:24px;color:#dfe2e6;white-space:nowrap">Coming soon</div>
</div>
<!-- STATUS -->
<div id="st" class="a">
  <div class="a" style="left:0;top:0;width:42.5px;height:27px;background:#a880f7"></div>
  <svg style="left:15px;top:6px" width="13" height="15"><path d="M1.1 4.6L5.5 9.1L1.4 13.8M11 0.3L6.4 4.6L11 9.3" fill="none" stroke="#3a1d8a" stroke-width="1.6"/></svg>
  <svg style="left:53px;top:5px" width="16" height="18"><g fill="none" stroke="#b9bfca" stroke-width="1.3"><circle cx="3.5" cy="3.3" r="2.4"/><circle cx="3.5" cy="14.5" r="2.4"/><circle cx="12" cy="6.2" r="2.4"/><path d="M3.5 5.7V12.1M12 8.6Q12 11 8 11H6Q3.5 11 3.5 12.5"/></g></svg>
  <div class="a" style="left:74px;top:3.4px;line-height:19px;white-space:nowrap">main</div>
  <svg style="left:127px;top:6px" width="17" height="16"><g fill="none" stroke="#b9bfca" stroke-width="1.3"><path d="M2 7A6.3 6.3 0 0 1 14 5M15 9A6.3 6.3 0 0 1 3 11"/><path d="M14.5 1.5V5.5H10.5M2.5 14.5V10.5H6.5"/></g></svg>
  <svg style="left:165px;top:5.5px" width="17" height="17"><g fill="none" stroke="#b9bfca" stroke-width="1.3"><circle cx="8.5" cy="8.5" r="7.3"/><path d="M5.5 5.5L11.5 11.5M11.5 5.5L5.5 11.5"/></g></svg>
  <div class="a" style="left:185px;top:3.4px;line-height:19px">0</div>
  <svg style="left:199px;top:5px" width="17" height="17"><g fill="none" stroke="#b9bfca" stroke-width="1.3" stroke-linejoin="round"><path d="M8.5 1.3L16 15.5H1Z"/><path d="M8.5 6V11"/></g><circle cx="8.5" cy="13" r="0.8" fill="#b9bfca"/></svg>
  <div class="a" style="left:219px;top:3.4px;line-height:19px">4</div>
  <svg style="left:233px;top:5.5px" width="17" height="17"><g fill="none" stroke="#b9bfca" stroke-width="1.3"><circle cx="8.5" cy="8.5" r="7.3"/><path d="M8.5 7.5V12.5"/></g><circle cx="8.5" cy="5" r="0.9" fill="#b9bfca"/></svg>
  <div class="a" style="left:254px;top:3.4px;line-height:19px">30</div>
  <svg style="left:1536px;top:7px" width="16" height="13"><g fill="#b9bfca"><rect x="0" y="0.5" width="2" height="1.6"/><rect x="3" y="0.5" width="6" height="1.6"/><rect x="3" y="4" width="5" height="1.6"/><rect x="0" y="7.5" width="2" height="1.6"/><rect x="3" y="7.5" width="5" height="1.6"/><rect x="0" y="11" width="8" height="1.6"/><path d="M12 2.5L13 5.5L16 6.5L13 7.5L12 10.5L11 7.5L8 6.5L11 5.5Z"/></g></svg>
  <div class="a" style="left:1557px;top:3.4px;line-height:19px;white-space:nowrap">IDX AI</div>
  <div class="a" style="left:1620px;top:3.4px;line-height:19px;white-space:nowrap">Android SDK built for x86 (android-x86 emulator)</div>
  <svg style="left:1964px;top:5px" width="17" height="18"><g fill="none" stroke="#b9bfca" stroke-width="1.3" stroke-linejoin="round"><path d="M3 13V8A5.5 5.5 0 0 1 14 8V13L15.5 14.5H1.5Z"/><path d="M6.5 15.5A2 2 0 0 0 10.5 15.5"/></g></svg>
</div>
</body></html>
